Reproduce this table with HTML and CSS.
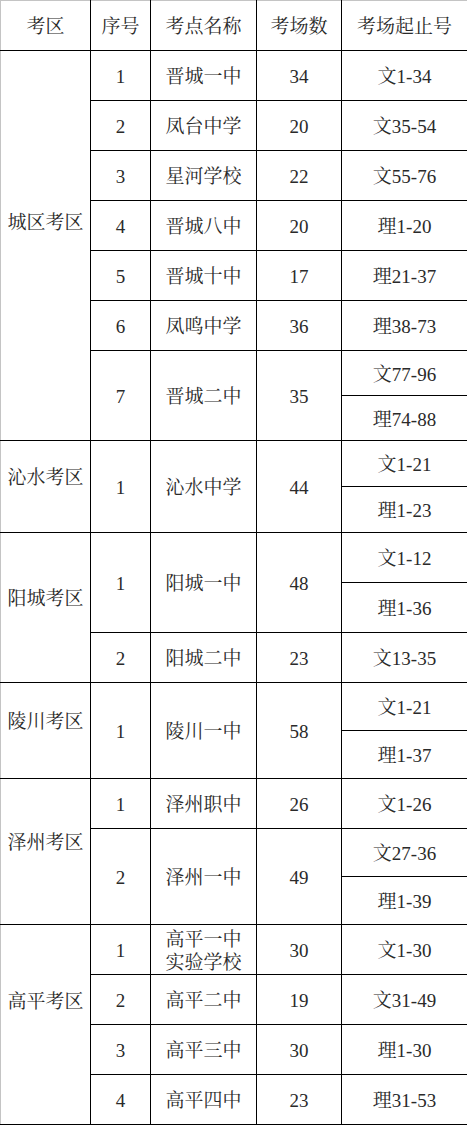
FILE: index.html
```html
<!DOCTYPE html>
<html lang="zh-CN">
<head>
<meta charset="utf-8">
<title>考点安排</title>
<link rel="stylesheet" href="styles.css">
</head>
<body>
<table class="exam">
  <colgroup>
    <col class="c-dist"><col class="c-no"><col class="c-name"><col class="c-count"><col class="c-range">
  </colgroup>
  <thead>
    <tr class="h50"><th>考区</th><th>序号</th><th>考点名称</th><th>考场数</th><th>考场起止号</th></tr>
  </thead>
  <tbody>
    <tr class="h50"><td rowspan="8" class="dist dist-tall">城区考区</td><td>1</td><td>晋城一中</td><td>34</td><td>文1-34</td></tr>
    <tr class="h50"><td>2</td><td>凤台中学</td><td>20</td><td>文35-54</td></tr>
    <tr class="h50"><td>3</td><td>星河学校</td><td>22</td><td>文55-76</td></tr>
    <tr class="h50"><td>4</td><td>晋城八中</td><td>20</td><td>理1-20</td></tr>
    <tr class="h50"><td>5</td><td>晋城十中</td><td>17</td><td>理21-37</td></tr>
    <tr class="h50"><td>6</td><td>凤鸣中学</td><td>36</td><td>理38-73</td></tr>
    <tr class="h45"><td rowspan="2">7</td><td rowspan="2">晋城二中</td><td rowspan="2">35</td><td>文77-96</td></tr>
    <tr class="h45"><td>理74-88</td></tr>

    <tr class="h46"><td rowspan="2" class="dist">沁水考区</td><td rowspan="2">1</td><td rowspan="2">沁水中学</td><td rowspan="2">44</td><td>文1-21</td></tr>
    <tr class="h46"><td>理1-23</td></tr>

    <tr class="h50"><td rowspan="3" class="dist">阳城考区</td><td rowspan="2">1</td><td rowspan="2">阳城一中</td><td rowspan="2">48</td><td>文1-12</td></tr>
    <tr class="h50"><td>理1-36</td></tr>
    <tr class="h50"><td>2</td><td>阳城二中</td><td>23</td><td>文13-35</td></tr>

    <tr class="h48"><td rowspan="2" class="dist">陵川考区</td><td rowspan="2">1</td><td rowspan="2">陵川一中</td><td rowspan="2">58</td><td>文1-21</td></tr>
    <tr class="h48"><td>理1-37</td></tr>

    <tr class="h50"><td rowspan="3" class="dist">泽州考区</td><td>1</td><td>泽州职中</td><td>26</td><td>文1-26</td></tr>
    <tr class="h48"><td rowspan="2">2</td><td rowspan="2">泽州一中</td><td rowspan="2">49</td><td>文27-36</td></tr>
    <tr class="h48"><td>理1-39</td></tr>

    <tr class="h50"><td rowspan="4" class="dist dist-tall">高平考区</td><td>1</td><td class="two-line">高平一中<br>实验学校</td><td>30</td><td>文1-30</td></tr>
    <tr class="h50"><td>2</td><td>高平二中</td><td>19</td><td>文31-49</td></tr>
    <tr class="h50"><td>3</td><td>高平三中</td><td>30</td><td>理1-30</td></tr>
    <tr class="h50"><td>4</td><td>高平四中</td><td>23</td><td>理31-53</td></tr>
  </tbody>
</table>
</body>
</html>
```
FILE: styles.css
```css
html, body {
  margin: 0;
  padding: 0;
  background: #ffffff;
}

.exam {
  border-collapse: collapse;
  table-layout: fixed;
  width: 467px;
  font-family: "Liberation Serif", "Noto Serif CJK SC", "Noto Sans CJK SC", serif;
  font-size: 19px;
  color: #2a2a2a;
  border-top: 1px solid #c4c4c4;
  border-left: 1px solid #c4c4c4;
  border-right: 1px solid #000;
  border-bottom: 1px solid #000;
}

.c-dist { width: 90px; }
.c-no { width: 60px; }
.c-name { width: 106px; }
.c-count { width: 85px; }
.c-range { width: 126px; }

.exam th,
.exam td {
  border: 1px solid #000;
  padding: 4px 0 0 0;
  text-align: center;
  vertical-align: middle;
  font-weight: normal;
  line-height: 1.2;
  white-space: nowrap;
}

.exam th { border-top-color: #c4c4c4; }
.exam td.dist, .exam th:first-child { border-left-color: #c4c4c4; }

.h50 { height: 50px; }
.h48 { height: 48px; }
.h46 { height: 46px; }
.h45 { height: 45px; }

.exam td.dist { padding-bottom: 20px; }
.exam td.dist-tall { padding-bottom: 48px; }

.exam td.two-line { line-height: 23px; padding-top: 2px; }
```
